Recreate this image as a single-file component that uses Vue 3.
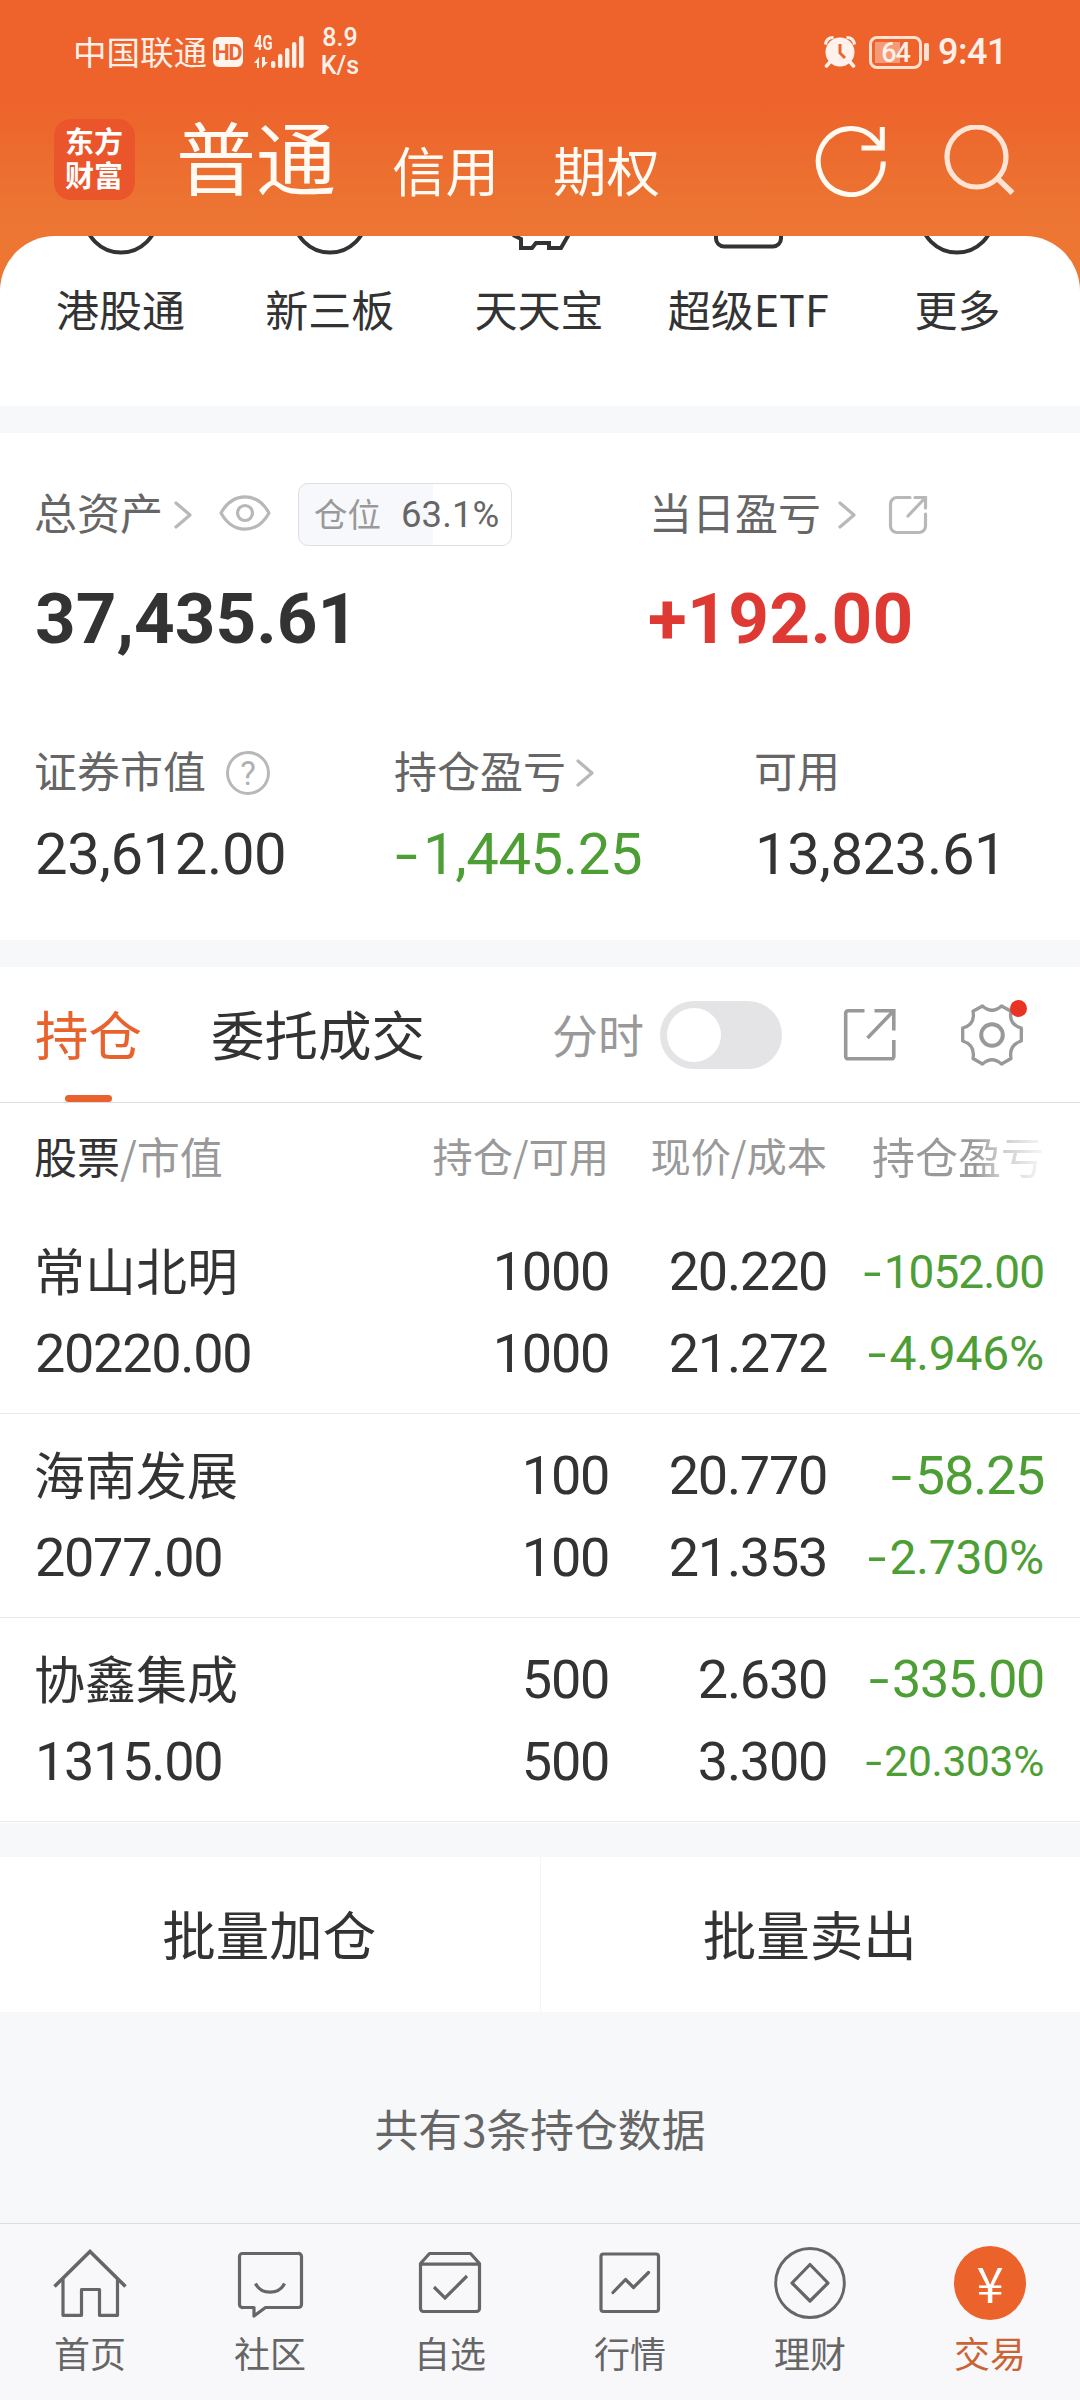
<script setup>
const shortcuts = [
  { label: '港股通', icon: 'circle' },
  { label: '新三板', icon: 'circle' },
  { label: '天天宝', icon: 'pig' },
  { label: '超级ETF', icon: 'square' },
  { label: '更多', icon: 'circle' },
]
const holdings = [
  { name: '常山北明', value: '20220.00', qty: '1000', avail: '1000', price: '20.220', cost: '21.272', pl: '1052.00', pct: '4.946%', plSize: 'm', pctSize: 'p' },
  { name: '海南发展', value: '2077.00', qty: '100', avail: '100', price: '20.770', cost: '21.353', pl: '58.25', pct: '2.730%', plSize: 'xl', pctSize: 'p' },
  { name: '协鑫集成', value: '1315.00', qty: '500', avail: '500', price: '2.630', cost: '3.300', pl: '335.00', pct: '20.303%', plSize: 'l', pctSize: 's' },
]
const navs = ['首页', '社区', '自选', '行情', '理财', '交易']
</script>

<template>
  <div class="app">
    <header class="top">
      <div class="status">
        <span class="carrier">中国联通</span>
        <span class="hd">HD</span>
        <div class="signal">
          <span class="gen">4G</span>
          <svg width="52" height="32" viewBox="0 0 52 32" fill="#fff0e9">
            <path d="M0 27l5-6v11H3v-5zM8 21v11l6-6h-3v-5z" />
            <rect x="17" y="25" width="4.4" height="7" rx="2" />
            <rect x="24" y="18" width="4.4" height="14" rx="2" />
            <rect x="31" y="12" width="4.4" height="20" rx="2" />
            <rect x="38" y="6" width="4.4" height="26" rx="2" />
            <rect x="45" y="0" width="4.6" height="32" rx="2" />
          </svg>
        </div>
        <div class="speed"><span>8.9</span><span>K/s</span></div>
        <svg class="alarm" width="32" height="32" viewBox="0 0 32 32" fill="none" stroke="#fff2ec">
          <circle cx="16" cy="16" r="14.5" fill="#fff2ec" stroke="none" />
          <path d="M1.5 8.500C2 4 5 1.500 9.500 1.500M30.500 8.500C30 4 27 1.500 22.500 1.500" stroke-width="3" />
          <path d="M6 26l-3.500 4M26 26l3.500 4" stroke-width="3.500" stroke-linecap="round" />
          <path d="M16 8v9l5 5" stroke="#ed642d" stroke-width="3" />
        </svg>
        <div class="battery"><span>64</span></div>
        <i class="cap"></i>
        <span class="clock">9:41</span>
      </div>
      <div class="titlebar">
        <div class="logo">东方财富</div>
        <span class="t-main">普通</span>
        <span class="t-sub">信用</span>
        <span class="t-sub second">期权</span>
        <svg class="refresh" width="72" height="72" viewBox="0 0 72 72" fill="none" stroke="#fffaf2" stroke-width="5">
          <path d="M68.300 36.500A32.500 33 0 1 1 60 14.500L67 22" />
          <path d="M67.300 2v21H46.500" />
        </svg>
        <svg class="search" width="72" height="72" viewBox="0 0 72 72" fill="none" stroke="#ffe4d5" stroke-width="5.200">
          <ellipse cx="32.500" cy="32" rx="29.500" ry="30" />
          <path d="M53.500 53.500L68.500 68" stroke-width="5.500" />
        </svg>
      </div>
    </header>

    <section class="quick">
      <div v-for="s in shortcuts" :key="s.label" class="q-item">
        <svg width="80" height="22" viewBox="0 0 80 22" fill="none" stroke="#333" stroke-width="4">
          <circle v-if="s.icon === 'circle'" cx="40" cy="-20" r="36.500" />
          <path v-else-if="s.icon === 'pig'" d="M14 -1l8 4v9h11l4-5h13v5h12l8-14" />
          <rect v-else x="8" y="-48" width="65" height="58.500" rx="8" />
        </svg>
        <span>{{ s.label }}</span>
      </div>
    </section>

    <section class="assets">
      <div class="a-row labels1">
        <div class="a-left">
          <span>总资产</span>
          <svg class="arr a1" width="18" height="28" viewBox="0 0 18 28"><path d="M2 2l14 12L2 26" /></svg>
          <svg class="eye" width="52" height="36" viewBox="0 0 52 36" fill="none" stroke="#b8b8b8" stroke-width="3.200">
            <path d="M2 18C14-3.500 38-3.500 50 18C38 39.500 14 39.500 2 18z" stroke-linejoin="round" />
            <circle cx="26" cy="18" r="7.500" />
          </svg>
          <div class="pos"><span class="pos-k">仓位</span><span class="pos-v">63.1%</span></div>
        </div>
        <div class="a-right">
          <span>当日盈亏</span>
          <svg class="arr a2" width="18" height="28" viewBox="0 0 18 28"><path d="M2 2l14 12L2 26" /></svg>
          <svg class="share1" width="40" height="40" viewBox="0 0 40 40" fill="none" stroke="#b8b8b8" stroke-width="3.200">
            <path d="M22 2.500H9a6.500 6.500 0 0 0-6.500 6.500v22A6.500 6.500 0 0 0 9 37.500H31A6.500 6.500 0 0 0 37.500 31V19" stroke-linecap="round" />
            <path d="M27 2.500H37.500V13M37 3L20 21" stroke-linecap="round" />
          </svg>
        </div>
      </div>
      <div class="a-row big">
        <span class="a-left">37,435.61</span>
        <span class="a-right red">+192.00</span>
      </div>
      <div class="a-row labels2">
        <div class="c1"><span>证券市值</span><span class="help">?</span></div>
        <div class="c2"><span>持仓盈亏</span><svg class="arr a3" width="18" height="28" viewBox="0 0 18 28"><path d="M2 2l14 12L2 26" /></svg></div>
        <div class="c3"><span>可用</span></div>
      </div>
      <div class="a-row vals">
        <div class="c1">23,612.00</div>
        <div class="c2 green"><span class="neg">-</span>1,445.25</div>
        <div class="c3">13,823.61</div>
      </div>
    </section>

    <section class="hold">
      <div class="tabs">
        <div class="tab on">持仓<i></i></div>
        <div class="tab tab2">委托成交</div>
        <span class="fs">分时</span>
        <div class="toggle"><i></i></div>
        <svg class="share2" width="54" height="54" viewBox="0 0 54 54" fill="none" stroke="#999" stroke-width="3.600">
          <path d="M21.500 2.800H5A2.300 2.300 0 0 0 2.700 5.100V48.500A2.300 2.300 0 0 0 5 50.800H48.500A2.300 2.300 0 0 0 50.800 48.500V32" />
          <path d="M31.500 2.800H50.800V22.500M50 3.500L24.500 30" />
        </svg>
        <div class="gear">
          <svg width="62" height="62" viewBox="0 0 62 62" fill="none" stroke="#999" stroke-width="3.300" stroke-linejoin="round">
            <path d="M21.500 2Q31 10.500 40.500 2L50 7.200Q47.500 20.500 60.300 24V37Q47.500 41 50 54.500L40.500 60Q31 51.500 21.500 60L12 54.500Q14.500 41 1.700 37V24Q14.500 20.500 12 7.200Z" />
            <circle cx="31" cy="31" r="10.800" stroke-width="4" />
          </svg>
          <i></i>
        </div>
      </div>
      <div class="thead">
        <div class="k1"><b>股票</b>/市值</div>
        <div class="k2">持仓/可用</div>
        <div class="k3">现价/成本</div>
        <div class="k4"><span>持仓盈亏</span></div>
      </div>
      <div v-for="h in holdings" :key="h.name" class="row">
        <div class="line">
          <div class="k1 name">{{ h.name }}</div>
          <div class="k2">{{ h.qty }}</div>
          <div class="k3">{{ h.price }}</div>
          <div class="k4 green" :class="h.plSize"><span class="neg">-</span>{{ h.pl }}</div>
        </div>
        <div class="line">
          <div class="k1">{{ h.value }}</div>
          <div class="k2">{{ h.avail }}</div>
          <div class="k3">{{ h.cost }}</div>
          <div class="k4 green" :class="h.pctSize"><span class="neg">-</span>{{ h.pct }}</div>
        </div>
      </div>
    </section>

    <section class="batch">
      <div>批量加仓</div>
      <div>批量卖出</div>
    </section>

    <p class="total">共有3条持仓数据</p>

    <nav class="nav">
      <div v-for="(n, i) in navs" :key="n" class="n-item" :class="{ active: i === 5 }">
        <div v-if="i === 5" class="coin">¥</div>
        <svg v-else width="76" height="76" viewBox="0 0 76 76" fill="none" stroke="#666" stroke-width="3.200" stroke-linejoin="round">
          <template v-if="i === 0">
            <path d="M2.500 41.500L38 6.500L73.500 41.500" stroke-width="3.600" stroke-linejoin="miter" />
            <path d="M11 34V70.300H29.500V44.500H47.500V70.300H65.500V34" />
          </template>
          <template v-else-if="i === 1">
            <path d="M10.500 8.500H66A3 3 0 0 1 69.500 11.500V59.500A3 3 0 0 1 66.500 62.500H33.500L22 71V62.500H11A3 3 0 0 1 7.500 59.500V11.500A3 3 0 0 1 10.500 8.500Z" />
            <path d="M23.500 38.500C29 50 47 50 52.500 38.500" />
          </template>
          <template v-else-if="i === 2">
            <path d="M17.500 8.500H58.500L67.500 18.500V63.500A3 3 0 0 1 64.500 66.500H11.500A3 3 0 0 1 8.500 63.500V18.500ZM8.500 19.200H67.500" />
            <path d="M22 42L33 53L55 31" stroke-linejoin="miter" />
          </template>
          <template v-else-if="i === 3">
            <rect x="9" y="9" width="57.500" height="57.500" rx="2.500" />
            <path d="M21 47.500L33.500 34.500L41.500 42.500L56.500 27.500" stroke-linecap="round" />
          </template>
          <template v-else>
            <ellipse cx="38" cy="38" rx="34.300" ry="34.500" stroke-width="2.900" />
            <path d="M38 19.500L56 38L38 56L20 38Z" />
          </template>
        </svg>
        <span>{{ n }}</span>
      </div>
    </nav>
  </div>
</template>

<style>
body { background: #f7f8fa; }
</style>

<style scoped>
.app {
  width: 1080px;
  height: 2400px;
  display: flex;
  flex-direction: column;
  overflow: hidden;
  background: #f7f8fa;
  color: #333;
  font-family: "Noto Sans CJK SC", sans-serif;
  font-size: 43px;
  box-sizing: border-box;
  white-space: nowrap;
}
.app * { box-sizing: border-box; }
svg { flex: none; display: block; }
i { display: block; }

.top {
  height: 292px;
  margin-bottom: -56px;
  flex: none;
  background: linear-gradient(#ee632b 0, #ed632b 100px, #ec7332 200px, #ed7633 240px);
  color: #fffaf3;
}
.status {
  height: 104px;
  padding: 0 76px 0 73px;
  display: flex;
  align-items: center;
  color: #fff0e9;
}
.carrier { font-size: 33.5px; line-height: 40px; width: 140px; margin-top: -3px; }
.hd {
  width: 30px; height: 30px; border-radius: 6px;
  background: #fff3ed; color: #ed642d;
  font: 700 21.5px/31px Roboto, sans-serif;
  letter-spacing: -1.2px;
  text-align: center;
}
.signal { position: relative; width: 52px; height: 32px; margin-left: 11px; }
.signal .gen {
  position: absolute; left: 0; top: -2px;
  font: 700 20px/19px Roboto, sans-serif;
  transform: scaleX(.74); transform-origin: left;
}
.speed {
  margin-left: 15px; width: 38px;
  display: flex; flex-direction: column; align-items: center;
  font: 500 25px/28px Roboto, sans-serif;
}
.alarm { margin-left: auto; }
.battery {
  width: 53px; height: 33px; margin-left: 13px;
  border: 3px solid #ffe1d3; border-radius: 8px;
  background: linear-gradient(#f49b78, #f49b78) 3px 3px / 25px 21px no-repeat;
  display: flex; justify-content: center;
}
.battery span { font: 500 27px/28px Roboto, sans-serif; letter-spacing: -1px; }
.cap { width: 5px; height: 18px; margin-left: 2px; border-radius: 2px; background: #ffe1d3; }
.clock { font: 500 36px/40px Roboto, sans-serif; letter-spacing: -.5px; margin-left: 9px; width: 66px; }

.titlebar { height: 132px; display: flex; padding-left: 54px; }
.logo {
  width: 81px; height: 81px; margin-top: 15px; border-radius: 17px;
  background: #eb552b; color: #fff;
  padding: 4px 10px 0 11px;
  font-weight: 700; font-size: 29px; line-height: 34px;
  white-space: normal; word-break: break-all;
}
.t-main { font-size: 80px; line-height: 100px; margin: 0 0 0 41px; width: 216px; }
.t-sub { font-size: 53.5px; line-height: 70px; margin-top: 30px; width: 161px; }
.t-sub.second { width: 262px; }
.refresh { margin-top: 21px; }
.search { margin: 21px 0 0 57px; }

.quick {
  height: 170px;
  flex: none;
  background: #fff;
  border-radius: 55px 55px 0 0;
  padding: 0 18px 0 16px;
  display: flex;
  overflow: hidden;
}
.q-item { flex: 1; display: flex; flex-direction: column; align-items: center; }
.q-item span { line-height: 60px; margin-top: 20px; }

.assets {
  margin-top: 27px; height: 507px; flex: none;
  background: #fff; color: #666;
  padding-left: 34px;
  display: flex; flex-direction: column;
}
.a-row, .a-left, .a-right, .c1, .c2, .c3 { display: flex; align-items: center; }
.a-left { width: 615px; }
.labels1 { height: 61px; margin-top: 51px; }
.labels1 span { line-height: 60px; }
.labels1 .a-left > span, .labels1 .a-right > span { margin-top: -7px; }
.arr { fill: none; stroke: #b8b8b8; stroke-width: 3.2; stroke-linecap: round; stroke-linejoin: round; }
.a1 { margin-left: 11px; }
.eye { margin-left: 27px; margin-top: -3px; }
.a2 { margin-left: 17px; }
.share1 { margin-left: 32px; }
.pos {
  margin-left: 27px; width: 214px; height: 63px;
  border: 1px solid #dfdfe2; border-radius: 10px;
  background: linear-gradient(90deg, #f7f8fb 63.1%, #fff 63.1%);
  display: flex; align-items: center; padding-left: 15px;
}
.pos-k { font-size: 33.5px; color: #999; margin-top: -4px; }
.pos-v { font: 400 36.5px/60px Roboto, sans-serif; margin-left: 20px; letter-spacing: .1px; }
.big { height: 80px; margin-top: 34px; padding-left: 1px; font: 700 71px/80px Roboto, sans-serif; color: #333; }
.big .a-right { margin-left: -2px; letter-spacing: .4px; }
.red { color: #de3a33; }
.labels2 { height: 60px; margin-top: 84px; }
.labels2 span:first-child { margin-top: -8px; }
.c1, .c2 { width: 360px; }
.help {
  width: 44px; height: 44px; margin-left: 20px;
  border: 3px solid #b8b8b8; border-radius: 50%;
  font: 400 33px/39px Roboto, sans-serif; color: #b0b0b0; text-align: center;
}
.a3 { margin-left: 10px; }
.vals { height: 70px; margin-top: 16px; padding-left: 1px; font: 400 58px/70px Roboto, sans-serif; letter-spacing: -.4px; color: #333; }
.green, .vals .green { color: #4c9e35; }
.neg { display: inline-block; width: .5em; text-align: center; transform: scaleX(1.4); letter-spacing: 0; }
.vals .neg { margin-left: -3px; margin-right: 2px; }

.hold { margin-top: 27px; flex: none; background: #fff; height: 856px; }
.tabs {
  height: 136px; padding-left: 35px;
  border-bottom: 1px solid #dcdcde;
  display: flex; align-items: center;
}
.tab { font-size: 53.5px; line-height: 70px; height: 74px; width: 176px; position: relative; }
.tab.on { color: #e8622e; }
.tab.on i { position: absolute; left: 30px; top: 97px; width: 47px; height: 7px; border-radius: 4px; background: #e9622d; }
.tab2 { width: 342px; }
.fs { font-size: 46px; line-height: 70px; height: 74px; width: 107px; margin-left: -1px; margin-right: 1px; color: #999; }
.toggle { width: 122px; height: 68px; border-radius: 34px; background: #e4e4e6; padding: 7px; }
.toggle i { width: 54px; height: 54px; border-radius: 50%; background: #fff; }
.share2 { margin-left: 61px; }
.gear { margin-left: 64px; position: relative; }
.gear i { position: absolute; right: -4px; top: -4px; width: 17px; height: 17px; border-radius: 50%; background: #e93323; }

.thead {
  height: 107px; padding-left: 35px;
  display: flex; align-items: center; color: #999;
  line-height: 60px;
}
.thead > div { margin-top: -3px; }
.k1 { width: 373px; }
.k2 { width: 201px; text-align: right; }
.k3 { width: 218px; text-align: right; }
.k4 { width: 217px; text-align: right; }
.thead .k1 { margin-left: -1px; margin-right: 1px; }
.thead b { font-weight: 400; color: #333; }
.thead .k2, .thead .k3 { font-size: 40.2px; }
.thead .k4 span {
  display: inline-block;
  background: linear-gradient(90deg, #999 60%, #c4c4c4 72%, #eee 94%, #f6f6f6);
  -webkit-background-clip: text; background-clip: text; color: transparent;
}
.row {
  height: 204px; padding: 21px 0 0 35px;
  border-bottom: 1px solid #e9e9ea;
  font: 400 54px/80px Roboto, sans-serif;
  letter-spacing: -1.3px;
}
.line { display: flex; height: 82px; align-items: center; }
.name { font: 400 51px/80px "Noto Sans CJK SC", sans-serif; letter-spacing: 0; margin: -6px 1px 0 -1px; }
.k4.m { font-size: 46px; letter-spacing: -1px; }
.k4.p { font-size: 48px; letter-spacing: -.2px; }
.k4.l { font-size: 52px; }
.k4.s { font-size: 42.5px; letter-spacing: -.3px; }

.batch { margin-top: 34px; height: 155px; flex: none; display: flex; background: #fff; }
.batch div { flex: 1; text-align: center; font-size: 53.5px; line-height: 151px; padding-right: 1px; }
.batch div + div { border-left: 1px solid #f5f5f6; }
.total { margin: 0; height: 211px; flex: none; padding-top: 86px; font-size: 43.8px; line-height: 60px; color: #666; text-align: center; }
.nav {
  height: 177px; flex: none; display: flex;
  background: #f8f8fb; border-top: 1px solid #dedee1;
  color: #666;
}
.n-item { flex: 1; display: flex; flex-direction: column; align-items: center; padding-top: 21px; font-size: 36px; line-height: 50px; }
.n-item span { margin-top: 6px; }
.coin {
  width: 72px; height: 74px; margin: 1px 0; border-radius: 50%;
  background: #ec622b; color: #fff;
  font: 400 49px/71px "Noto Sans CJK SC", sans-serif; text-align: center;
}
.active { color: #cb6434; }
</style>
